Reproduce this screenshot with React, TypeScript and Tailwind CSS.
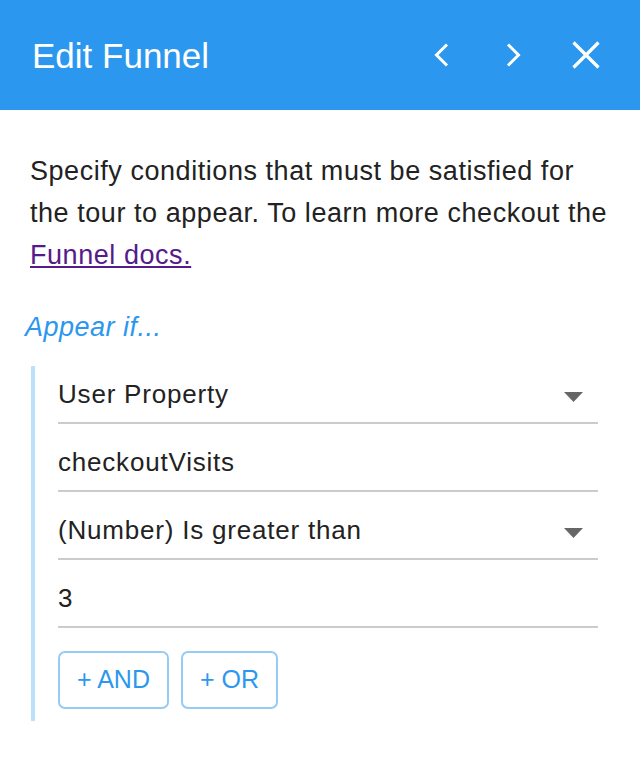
import React from "react";

const font = { fontFamily: '"Liberation Sans", Arial, sans-serif' };

const Caret = () => (
  <svg width="19" height="10" viewBox="0 0 19 10" className="shrink-0">
    <path d="M0 0 L19 0 L9.5 10 Z" fill="#666666" />
  </svg>
);

const Row = ({
  text,
  first,
  select,
}: {
  text: string;
  first?: boolean;
  select?: boolean;
}) => (
  <div
    className={`flex items-end justify-between border-b-2 border-[#cbcbcb] pb-[15px] pr-[15px] ${
      first ? "h-[58px]" : "h-[68px]"
    }`}
  >
    <span className="text-[26px] leading-[26px] tracking-[0.8px] text-[#222222]">
      {text}
    </span>
    {select ? (
      <div className="mb-[5px]">
        <Caret />
      </div>
    ) : null}
  </div>
);

const App = () => {
  return (
    <div className="w-[640px] h-[780px] bg-white" style={font}>
      <div className="h-[110px] bg-[#2c97ee] flex items-center pl-[32px] pr-[40px]">
        <h1 className="text-[35px] text-white leading-none mt-[1px]">
          Edit Funnel
        </h1>
        <div className="ml-auto flex items-center">
          <svg width="16" height="24" viewBox="0 0 16 24">
            <path
              d="M14 1.5 L3.5 12 L14 22.5"
              fill="none"
              stroke="white"
              strokeWidth="3"
            />
          </svg>
          <svg width="16" height="24" viewBox="0 0 16 24" className="ml-[57px]">
            <path
              d="M2 1.5 L12.5 12 L2 22.5"
              fill="none"
              stroke="white"
              strokeWidth="3"
            />
          </svg>
          <svg width="28" height="28" viewBox="0 0 28 28" className="ml-[50px]">
            <path
              d="M1.5 1.5 L26.5 26.5 M26.5 1.5 L1.5 26.5"
              fill="none"
              stroke="white"
              strokeWidth="3.2"
            />
          </svg>
        </div>
      </div>

      <div className="pt-[40px] px-[30px]">
        <p className="text-[27px] leading-[42px] tracking-[0.55px] text-[#222222] whitespace-nowrap">
          Specify conditions that must be satisfied for
          <br />
          the tour to appear. To learn more checkout the
          <br />
          <a href="#" className="text-[#551a8b] underline">
            Funnel docs.
          </a>
        </p>
      </div>

      <div className="pl-[25px] mt-[35px]">
        <p className="text-[27px] leading-[32px] tracking-[0.5px] italic text-[#2c97ee]">
          Appear if...
        </p>
      </div>

      <div className="ml-[31px] mt-[23px] w-[567px] border-l-4 border-[#bde0fa] pl-[23px] pb-[12px]">
        <Row text="User Property" first select />
        <Row text="checkoutVisits" />
        <Row text="(Number) Is greater than" select />
        <Row text="3" />
        <div className="flex gap-[12px] mt-[23px]">
          <button className="h-[58px] px-[17px] rounded-[7px] border-2 border-[#95ccf6] text-[25px] text-[#2c97ee]">
            + AND
          </button>
          <button className="h-[58px] px-[17px] rounded-[7px] border-2 border-[#95ccf6] text-[25px] text-[#2c97ee]">
            + OR
          </button>
        </div>
      </div>
    </div>
  );
};

export default App;
